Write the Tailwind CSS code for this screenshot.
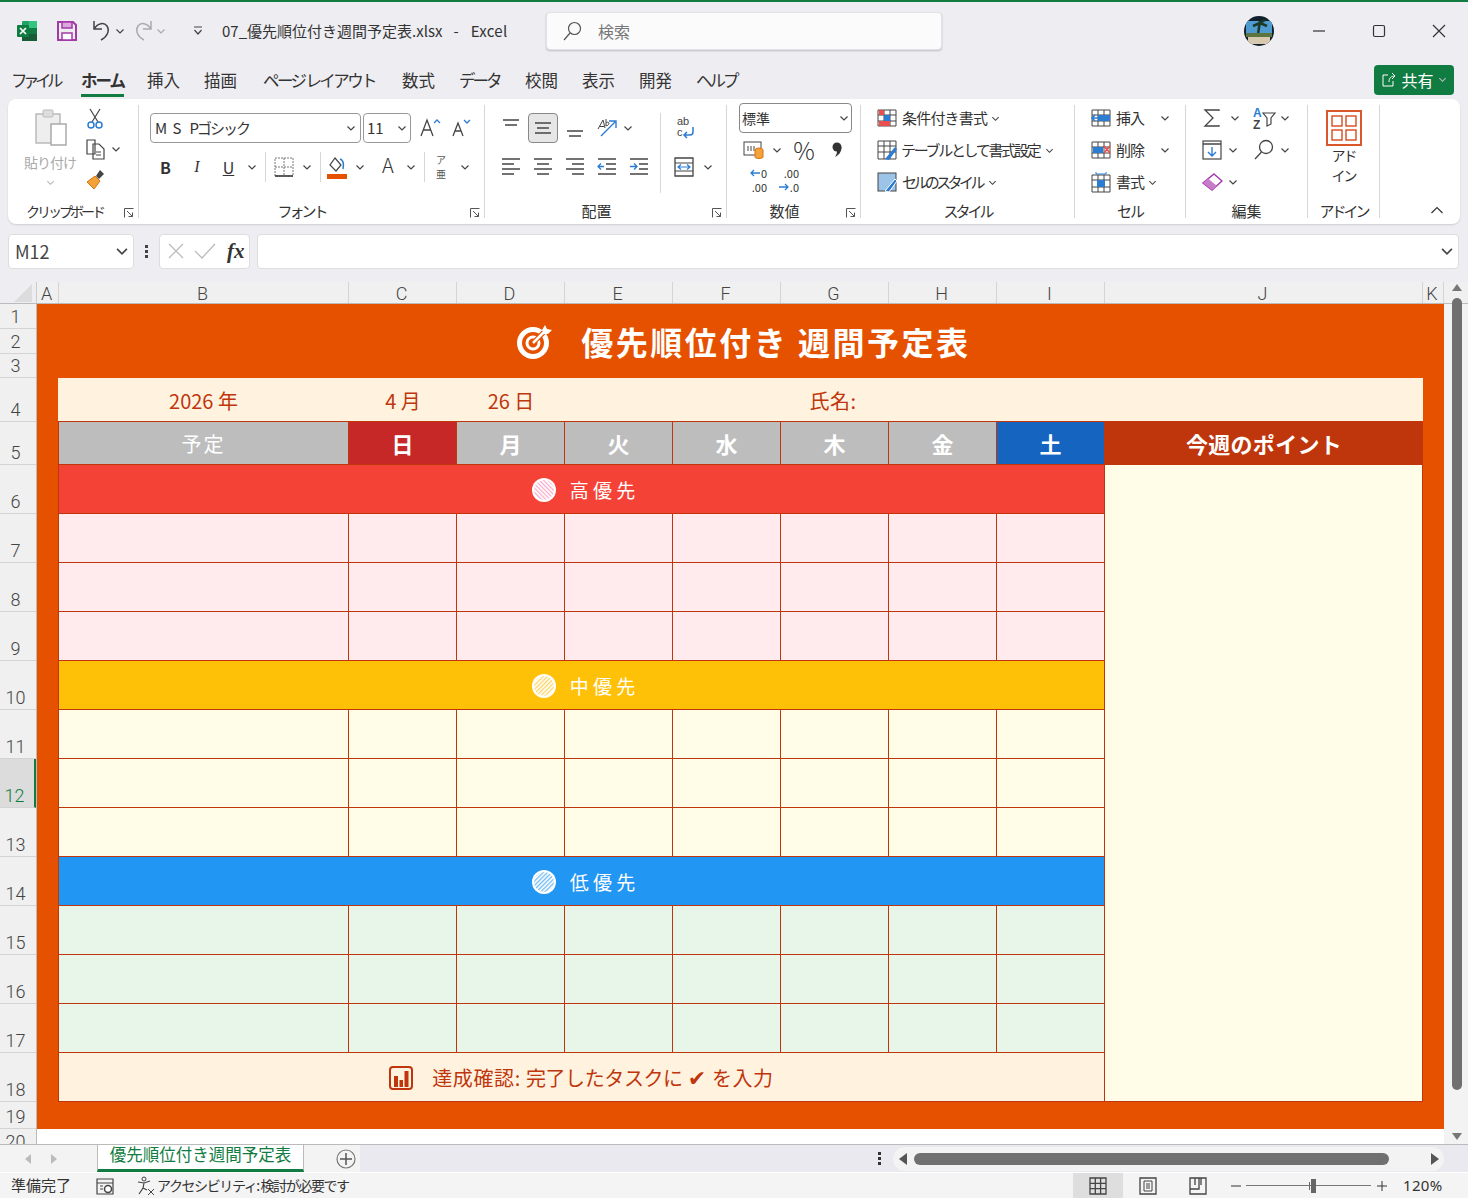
<!DOCTYPE html>
<html lang="ja">
<head>
    <meta charset="UTF-8">
    <title>07_優先順位付き週間予定表.xlsx - Excel</title>
    <script src="https://cdn.jsdelivr.net/npm/@tailwindcss/browser@4"></script>
</head>
<body class="w-[1468px] h-[1198px] overflow-hidden bg-[#eeedf2] text-[#333] font-['Noto_Sans_CJK_JP','Noto_Sans',sans-serif]">

    <!-- shared shapes -->
    <svg class="absolute w-0 h-0">
        <defs>
            <symbol id="chev" viewBox="0 0 10 10"><path d="M1.5 3.5 5 7 8.5 3.5" fill="none" stroke="#444" stroke-width="1.2"/></symbol>
            <symbol id="launch" viewBox="0 0 10 10"><path d="M.5 9.5V.5H9.5M3 3 8.500 8.500M8.500 4.500V8.500H4.500" fill="none" stroke="#555"/></symbol>
            <pattern id="hatchRed" width="3" height="3" patternUnits="userSpaceOnUse" patternTransform="rotate(-45)"><rect width="1.200" height="3" fill="#f8a9c8"/></pattern>
            <pattern id="hatchAmber" width="3" height="3" patternUnits="userSpaceOnUse" patternTransform="rotate(45)"><rect width="1.300" height="3" fill="#ffd361"/></pattern>
            <pattern id="hatchBlue" width="3" height="3" patternUnits="userSpaceOnUse" patternTransform="rotate(45)"><rect width="1.300" height="3" fill="#6db8f5"/></pattern>
        </defs>
    </svg>

    <!-- title bar -->
    <header class="h-[64px] border-t-2 border-[#107c41] pb-[4px] flex items-center relative">
        <svg class="w-[22px] h-[22px] ml-[16px]" viewBox="0 0 22 22"><rect x="6" y="1" width="15" height="20" rx="1" fill="#21a366"/><rect x="13" y="1" width="8" height="7" fill="#33c481"/><rect x="13" y="8" width="8" height="6.500" fill="#107c41"/><rect x="6" y="14" width="15" height="7" fill="#185c37"/><rect x="1" y="5" width="12" height="12" rx="1" fill="#107c41"/><path d="M4 8 10 14M10 8 4 14" stroke="#fff" stroke-width="1.700"/></svg>
        <svg class="w-[22px] h-[22px] ml-[18px]" viewBox="0 0 22 22"><path d="M2 2H17L20 5V20H2Z" fill="none" stroke="#a23aa7" stroke-width="2"/><rect x="6" y="2" width="10" height="6" fill="#dba8de" stroke="#a23aa7" stroke-width="1.500"/><rect x="6" y="13" width="10" height="7" fill="#fff" stroke="#a23aa7" stroke-width="1.500"/></svg>
        <svg class="w-[22px] h-[24px] ml-[13px]" viewBox="0 0 22 24"><path d="M3 2V10H11M3 10C7 4 13 3 16 7 19 12 16 18 10 21" fill="none" stroke="#444" stroke-width="1.500"/></svg>
        <svg class="w-[10px] h-[10px] ml-[2px]"><use href="#chev"/></svg>
        <svg class="w-[22px] h-[24px] ml-[7px]" viewBox="0 0 22 24"><path d="M19 2V10H11M19 10C15 4 9 3 6 7 3 12 6 18 12 21" fill="none" stroke="#aaa" stroke-width="1.500"/></svg>
        <svg class="w-[10px] h-[10px] ml-[2px] opacity-40"><use href="#chev"/></svg>
        <svg class="w-[10px] h-[10px] ml-[27px]" viewBox="0 0 10 10"><path d="M1 1H9M1.500 4 5 8 8.500 4" fill="none" stroke="#444" stroke-width="1.200"/></svg>
        <div class="ml-[19px] text-[15px] whitespace-nowrap w-[324px]">07_優先順位付き週間予定表.xlsx<span class="ml-[11px]">-</span><span class="ml-[12px] tracking-[.3px]">Excel</span></div>
        <div class="w-[396px] h-[38px] bg-[#fbfbfc] rounded border border-[#e2e2e6] shadow-[0_1px_2px_#0003] flex items-center">
            <svg class="w-[22px] h-[22px] ml-[14px]" viewBox="0 0 22 22"><circle cx="13.500" cy="8.500" r="6" fill="none" stroke="#555" stroke-width="1.200"/><path d="M9 13 3 20" stroke="#555" stroke-width="1.200"/></svg>
            <span class="ml-[15px] text-[16px] text-[#777]">検索</span>
        </div>
        <svg class="w-[30px] h-[30px] ml-[302px]" viewBox="0 0 30 30"><defs><clipPath id="face"><ellipse cx="15" cy="15" rx="15" ry="15"/></clipPath></defs><g clip-path="url(#face)"><rect width="30" height="30" fill="#10202c"/><rect x="2" y="5" width="26" height="14" fill="#4f9bd0"/><path d="M16 5 14 18M16 7 23 10M16 7 9 10M16 7 21 4" stroke="#1d3a28" stroke-width="2.500"/><rect x="2" y="17" width="26" height="4" fill="#5c7440"/><rect x="4" y="21" width="22" height="7" fill="#d6c9ae"/></g></svg>
        <svg class="w-[14px] h-[14px] ml-[38px]" viewBox="0 0 14 14"><path d="M1 7H13" stroke="#333" stroke-width="1.200"/></svg>
        <svg class="w-[14px] h-[14px] ml-[46px]" viewBox="0 0 14 14"><rect x="1.500" y="1.500" width="11" height="11" rx="1.500" fill="none" stroke="#333" stroke-width="1.200"/></svg>
        <svg class="w-[16px] h-[16px] ml-[45px]" viewBox="0 0 16 16"><path d="M2 2 14 14M14 2 2 14" stroke="#333" stroke-width="1.200"/></svg>
    </header>

    <!-- ribbon tabs -->
    <nav class="h-[35px] flex items-center pl-[11px] pb-[2px] text-[16.500px] whitespace-nowrap relative">
        <a class="w-[70px] tracking-[-4.500px] -mt-[1px]">ファイル</a>
        <a class="w-[66px] font-bold tracking-[-2px] relative -mt-[1px]">ホーム<span class="absolute left-0 top-[26px] w-[43px] h-[3px] bg-[#107c41]"></span></a>
        <a class="w-[57px] -mt-[1px]">挿入</a>
        <a class="w-[59px] -mt-[1px]">描画</a>
        <a class="w-[139px] tracking-[-2.600px] -mt-[1px]">ページ&nbsp;レイアウト</a>
        <a class="w-[57px] -mt-[1px]">数式</a>
        <a class="w-[66px] tracking-[-3px] -mt-[1px]">データ</a>
        <a class="w-[57px] -mt-[1px]">校閲</a>
        <a class="w-[57px] -mt-[1px]">表示</a>
        <a class="w-[57px] -mt-[1px]">開発</a>
        <a class="w-[60px] tracking-[-3px] -mt-[1px]">ヘルプ</a>
        <button class="ml-[618px] w-[80px] h-[30px] -mt-[2px] rounded bg-[#107c41] text-white text-[16px] flex items-center justify-center">
            <svg class="w-[16px] h-[16px]" viewBox="0 0 16 16"><path d="M7 3H2V14H12V9M8 10C8 6 10 4 14 4M11 1 14 4 11 7" fill="none" stroke="#fff"/></svg>
            <span class="mx-[4px]">共有</span>
            <svg class="w-[9px] h-[9px] invert"><use href="#chev"/></svg>
        </button>
    </nav>

    <!-- ribbon -->
    <section class="mx-[8px] h-[125px] bg-white rounded-lg shadow-[0_1px_2px_#0002] flex py-[6px] text-[15px] whitespace-nowrap">

        <!-- clipboard -->
        <div class="w-[131px] h-[113px] border-r border-[#d6d6d6] flex flex-col relative">
            <div class="flex pl-[12px] h-[94px]">
                <div class="w-[60px] flex flex-col items-center">
                    <svg class="w-[34px] h-[38px] mt-[4px]" viewBox="0 0 34 38"><path d="M3 5H27V34H3Z" fill="#eee" stroke="#bbb" stroke-width="1.500"/><rect x="10" y="1" width="10" height="7" rx="1" fill="#ddd" stroke="#bbb"/><rect x="18" y="15" width="15" height="21" fill="#fff" stroke="#aaa" stroke-width="1.500"/></svg>
                    <span class="text-[14px] text-[#aaa] tracking-[-1px] mt-[5px] leading-[20px]">貼り付け</span>
                    <svg class="w-[9px] h-[9px] mt-[6px] opacity-40"><use href="#chev"/></svg>
                </div>
                <div class="ml-[5px] pt-[3px]">
                    <svg class="w-[20px] h-[22px]" viewBox="0 0 20 22"><path d="M5 1 13 14M15 1 7 14" stroke="#444" stroke-width="1.200"/><circle cx="6" cy="17" r="3" fill="none" stroke="#2b7cd3" stroke-width="1.500"/><circle cx="14" cy="17" r="3" fill="none" stroke="#2b7cd3" stroke-width="1.500"/></svg>
                    <div class="flex items-center mt-[8px]">
                        <svg class="w-[22px] h-[22px]" viewBox="0 0 22 22"><path d="M2 2H10V16H2ZM8 6H14L19 11V21H8Z" fill="#fff" stroke="#444" stroke-width="1.200"/><path d="M11 14H16M11 17H16" stroke="#444"/></svg>
                        <svg class="w-[10px] h-[10px] ml-[4px]"><use href="#chev"/></svg>
                    </div>
                    <svg class="w-[22px] h-[24px] mt-[8px]" viewBox="0 0 22 24"><path d="M15 2 19 6 14 11 11 8Z" fill="#444"/><path d="M10 8 15 13 9 21 2 14Z" fill="#f2a13b" stroke="#d9730d"/></svg>
                </div>
            </div>
            <div class="mt-auto h-[14px] leading-[14px] text-[14px] text-center pr-[17px] tracking-[-3px]">クリップボード</div>
            <svg class="w-[10px] h-[10px] absolute right-[4px] bottom-0"><use href="#launch"/></svg>
        </div>

        <!-- font -->
        <div class="w-[346px] h-[113px] border-r border-[#d6d6d6] flex flex-col relative">
            <div class="flex items-center pl-[11px] pt-[8px] h-[38px]">
                <div class="w-[211px] h-[30px] border border-[#999] rounded flex items-center pl-[4px] pr-[4px]">
                    <span class="tracking-[1px]">M S</span>
                    <span class="ml-[7px] tracking-[-2px]">Pゴシック</span>
                    <svg class="w-[10px] h-[10px] ml-auto"><use href="#chev"/></svg>
                </div>
                <div class="w-[48px] h-[30px] ml-[2px] border border-[#999] rounded flex items-center pl-[3px] pr-[3px]">
                    <span>11</span>
                    <svg class="w-[10px] h-[10px] ml-auto"><use href="#chev"/></svg>
                </div>
                <svg class="w-[22px] h-[22px] ml-[8px]" viewBox="0 0 22 22"><path d="M2 19 8 3 14 19M4 13H12" fill="none" stroke="#444" stroke-width="1.300"/><path d="M15 6 18 3 21 6" fill="none" stroke="#2b7cd3" stroke-width="1.300"/></svg>
                <svg class="w-[20px] h-[20px] ml-[10px]" viewBox="0 0 20 20"><path d="M2 18 7 5 12 18M4 13H10" fill="none" stroke="#444" stroke-width="1.300"/><path d="M13 2 16 5 19 2" fill="none" stroke="#2b7cd3" stroke-width="1.300"/></svg>
            </div>
            <div class="flex items-center mt-[9px] h-[30px] pl-[16px]">
                <b class="w-[21px] text-center text-[16px]">B</b>
                <i class="w-[32px] text-center text-[16px] ml-[5px] font-['Liberation_Serif',serif]">I</i>
                <u class="w-[27px] text-center text-[16px] ml-[2px]">U</u>
                <svg class="w-[10px] h-[10px] ml-[5px]"><use href="#chev"/></svg>
                <span class="w-px h-[30px] bg-[#d6d6d6] ml-[8px]"></span>
                <svg class="w-[20px] h-[20px] ml-[8px]" viewBox="0 0 20 20"><path d="M1 1H19V19H1ZM10 1V19M1 10H19" fill="none" stroke="#777" stroke-dasharray="2 1"/><path d="M1 19H19" stroke="#333" stroke-width="1.500"/></svg>
                <svg class="w-[10px] h-[10px] ml-[8px]"><use href="#chev"/></svg>
                <span class="w-px h-[30px] bg-[#d6d6d6] ml-[8px]"></span>
                <span class="w-[20px] ml-[6px] flex flex-col items-center">
                    <svg class="w-[20px] h-[18px]" viewBox="0 0 20 18"><path d="M8 2 14 9 9 15 3 9Z" fill="none" stroke="#444" stroke-width="1.200"/><path d="M13 3C16 4 17 8 16 13" fill="none" stroke="#2b7cd3" stroke-width="1.500"/></svg>
                    <span class="w-[20px] h-[5px] bg-[#e65100]"></span>
                </span>
                <svg class="w-[10px] h-[10px] ml-[8px]"><use href="#chev"/></svg>
                <span class="w-[24px] ml-[11px] text-center text-[20px] -mt-[4px] font-light">A</span>
                <svg class="w-[10px] h-[10px] ml-[6px]"><use href="#chev"/></svg>
                <span class="w-px h-[30px] bg-[#d6d6d6] ml-[8px]"></span>
                <span class="w-[18px] ml-[7px] text-[10px] leading-[14px] text-center text-[#555]">ア<br>亜</span>
                <svg class="w-[10px] h-[10px] ml-[10px]"><use href="#chev"/></svg>
            </div>
            <div class="mt-auto h-[14px] leading-[14px] text-center pr-[20px] tracking-[-3px]">フォント</div>
            <svg class="w-[10px] h-[10px] absolute right-[4px] bottom-0"><use href="#launch"/></svg>
        </div>

        <!-- alignment -->
        <div class="w-[242px] h-[113px] border-r border-[#d6d6d6] flex flex-col relative">
            <div class="flex pl-[10px] pt-[8px]">
                <div class="w-[160px]">
                    <div class="flex items-center h-[30px]">
                        <svg class="w-[32px] h-[30px] -mt-[6px]" viewBox="0 0 32 30"><path d="M8 10H24M10 15H22" stroke="#444" stroke-width="1.300"/></svg>
                        <span class="w-[30px] h-[30px] border border-[#888] bg-[#e6e6e6] rounded flex items-center justify-center ml-[1px]"><svg class="w-[20px] h-[20px]" viewBox="0 0 20 20"><path d="M2 5H18M4 10H16M2 15H18" stroke="#444" stroke-width="1.300"/></svg></span>
                        <svg class="w-[32px] h-[30px] mt-[6px] ml-[1px]" viewBox="0 0 32 30"><path d="M8 15H24M10 20H22" stroke="#444" stroke-width="1.300"/></svg>
                        <svg class="w-[24px] h-[24px] ml-[4px]" viewBox="0 0 24 24"><path d="M3 13 8 4 10 12M4.500 10.500H9M11 3V10M11 7C13 5 15 7 13 9 12 10 11 10 11 9" fill="none" stroke="#444"/><path d="M6 20 20 6M14 5H21V12" fill="none" stroke="#2b7cd3" stroke-width="1.400"/></svg>
                        <svg class="w-[10px] h-[10px] ml-[4px]"><use href="#chev"/></svg>
                    </div>
                    <div class="flex items-center h-[30px] mt-[9px]">
                        <svg class="w-[32px] h-[24px]" viewBox="0 0 32 24"><path d="M7 4H25M7 9H19M7 14H25M7 19H19" stroke="#444" stroke-width="1.300"/></svg>
                        <svg class="w-[32px] h-[24px]" viewBox="0 0 32 24"><path d="M7 4H25M10 9H22M7 14H25M10 19H22" stroke="#444" stroke-width="1.300"/></svg>
                        <svg class="w-[32px] h-[24px]" viewBox="0 0 32 24"><path d="M7 4H25M13 9H25M7 14H25M13 19H25" stroke="#444" stroke-width="1.300"/></svg>
                        <svg class="w-[32px] h-[24px]" viewBox="0 0 32 24"><path d="M7 4H25M15 9H25M15 14H25M7 19H25" stroke="#444" stroke-width="1.300"/><path d="M13 11.500H7M10 8.500 7 11.500 10 14.500" fill="none" stroke="#2b7cd3" stroke-width="1.300"/></svg>
                        <svg class="w-[32px] h-[24px]" viewBox="0 0 32 24"><path d="M7 4H25M16 9H25M16 14H25M7 19H25" stroke="#444" stroke-width="1.300"/><path d="M7 11.500H14M11 8.500 14 11.500 11 14.500" fill="none" stroke="#2b7cd3" stroke-width="1.300"/></svg>
                    </div>
                </div>
                <span class="w-px h-[80px] bg-[#d6d6d6] ml-[5px]"></span>
                <div class="ml-[12px]">
                    <div class="h-[30px] flex items-center pl-[1px]">
                        <svg class="w-[22px] h-[26px] overflow-visible" viewBox="0 0 22 26"><text x="3" y="10" font-size="11" font-family="Liberation Sans" fill="#444">ab</text><text x="3" y="21" font-size="11" font-family="Liberation Sans" fill="#444">c</text><path d="M19 12V17C19 19 18 20 16 20H10M13 17 10 20 13 23" fill="none" stroke="#2b7cd3" stroke-width="1.500"/></svg>
                    </div>
                    <div class="h-[30px] mt-[9px] flex items-center">
                        <svg class="w-[22px] h-[22px]" viewBox="0 0 22 22"><path d="M2 2H20V20H2Z" fill="#fff" stroke="#444" stroke-width="1.300"/><path d="M2 7H20M2 15H20" stroke="#444"/><path d="M5 11H17M8 8.500 5 11 8 13.500M14 8.500 17 11 14 13.500" fill="none" stroke="#2b7cd3" stroke-width="1.200"/></svg>
                        <svg class="w-[10px] h-[10px] ml-[8px]"><use href="#chev"/></svg>
                    </div>
                </div>
            </div>
            <div class="mt-auto h-[14px] leading-[14px] text-center pr-[18px]">配置</div>
            <svg class="w-[10px] h-[10px] absolute right-[4px] bottom-0"><use href="#launch"/></svg>
        </div>

        <!-- number -->
        <div class="w-[134px] h-[113px] border-r border-[#d6d6d6] flex flex-col relative">
            <div class="w-[113px] h-[30px] ml-[12px] mt-[-2px] border border-[#888] rounded flex items-center pl-[2px] pr-[2px]">
                <span class="text-[14px]">標準</span>
                <svg class="w-[10px] h-[10px] ml-auto"><use href="#chev"/></svg>
            </div>
            <div class="flex items-center h-[30px] mt-[2px] pl-[16px]">
                <svg class="w-[22px] h-[22px]" viewBox="0 0 22 22"><rect x="1" y="3" width="17" height="13" fill="none" stroke="#444"/><path d="M5 7V12M8 7V12M11 7V12" stroke="#444"/><ellipse cx="16" cy="11" rx="4" ry="2" fill="#f2a13b" stroke="#d9730d"/><path d="M12 11V18C12 20 20 20 20 18V11" fill="#f2a13b" stroke="#d9730d"/></svg>
                <svg class="w-[10px] h-[10px] ml-[7px]"><use href="#chev"/></svg>
                <span class="w-[30px] ml-[7px] text-center text-[24px] leading-none font-light">%</span>
                <svg class="w-[12px] h-[18px] ml-[12px]" viewBox="0 0 12 18"><circle cx="6" cy="6" r="4.500" fill="#333"/><path d="M10.500 6C10.500 11 8 14 4 16 6 13 6 11 6 9Z" fill="#333"/></svg>
            </div>
            <div class="flex items-center h-[30px] pl-[16px] text-[11px] leading-[14px]">
                <span class="w-[24px] text-right">
                    <span class="flex items-center justify-end h-[14px]"><svg class="w-[10px] h-[10px] mr-[1px]" viewBox="0 0 10 10"><path d="M10 5H1M4 2 1 5 4 8" fill="none" stroke="#2b7cd3" stroke-width="1.300"/></svg>0</span>
                    <span class="block h-[14px]">.00</span>
                </span>
                <span class="w-[24px] ml-[8px] text-right">
                    <span class="block h-[14px]">.00</span>
                    <span class="flex items-center justify-end h-[14px]"><svg class="w-[10px] h-[10px] mr-[1px]" viewBox="0 0 10 10"><path d="M0 5H9M6 2 9 5 6 8" fill="none" stroke="#2b7cd3" stroke-width="1.300"/></svg>.0</span>
                </span>
            </div>
            <div class="mt-auto h-[14px] leading-[14px] text-center pr-[18px]">数値</div>
            <svg class="w-[10px] h-[10px] absolute right-[4px] bottom-0"><use href="#launch"/></svg>
        </div>

        <!-- styles -->
        <div class="w-[214px] h-[113px] border-r border-[#d6d6d6] flex flex-col pl-[15px] relative">
            <div class="flex items-center h-[32px] -mt-[3px]">
                <svg class="w-[22px] h-[22px]" viewBox="0 0 22 22"><path d="M2 3H20V19H2ZM2 8H20M2 14H20M8 3V19M14 3V19" fill="none" stroke="#444"/><rect x="3" y="3" width="5" height="5" fill="#e84f4f"/><rect x="8" y="8" width="6" height="6" fill="#2b7cd3"/><rect x="3" y="14" width="11" height="5" fill="#e84f4f"/></svg>
                <span class="ml-[4px] tracking-[-.8px]">条件付き書式</span>
                <svg class="w-[9px] h-[9px] ml-[4px]"><use href="#chev"/></svg>
            </div>
            <div class="flex items-center h-[32px]">
                <svg class="w-[22px] h-[22px]" viewBox="0 0 22 22"><path d="M2 2H20V20H2ZM2 7H20M2 13H20M8 2V20M14 2V20" fill="none" stroke="#444"/><path d="M9 20 19 8 21 10 13 21Z" fill="#2b7cd3"/></svg>
                <span class="ml-[3px] tracking-[-2.300px]">テーブルとして書式設定</span>
                <svg class="w-[9px] h-[9px] ml-[6px]"><use href="#chev"/></svg>
            </div>
            <div class="flex items-center h-[32px]">
                <svg class="w-[22px] h-[22px]" viewBox="0 0 22 22"><rect x="2" y="2" width="18" height="18" fill="#9cc3e8" stroke="#444"/><path d="M9 20 19 8 21 10 13 21Z" fill="#2b7cd3" stroke="#fff"/></svg>
                <span class="ml-[4px] tracking-[-3.600px]">セルのスタイル</span>
                <svg class="w-[9px] h-[9px] ml-[6px]"><use href="#chev"/></svg>
            </div>
            <div class="mt-auto h-[14px] leading-[14px] text-center pr-[15px] tracking-[-3px]">スタイル</div>
        </div>

        <!-- cells -->
        <div class="w-[111px] h-[113px] border-r border-[#d6d6d6] flex flex-col pl-[15px]">
            <div class="flex items-center h-[32px] -mt-[3px]">
                <svg class="w-[22px] h-[22px]" viewBox="0 0 22 22"><path d="M2 3H20V19H2ZM2 8H20M2 14H20M8 3V19M14 3V19" fill="none" stroke="#444"/><rect x="8" y="8" width="12" height="6" fill="#2b7cd3"/><path d="M10 11H2M5 8 2 11 5 14" fill="none" stroke="#2b7cd3" stroke-width="1.500"/></svg>
                <span class="ml-[4px] tracking-[-1px] w-[44px]">挿入</span>
                <svg class="w-[10px] h-[10px]"><use href="#chev"/></svg>
            </div>
            <div class="flex items-center h-[32px]">
                <svg class="w-[22px] h-[22px]" viewBox="0 0 22 22"><path d="M2 3H20V19H2ZM2 8H20M2 14H20M8 3V19M14 3V19" fill="none" stroke="#444"/><rect x="3" y="8" width="10" height="6" fill="#2b7cd3"/><path d="M14 7 20 14M20 7 14 14" stroke="#e84f4f" stroke-width="1.700"/></svg>
                <span class="ml-[4px] tracking-[-1px] w-[44px]">削除</span>
                <svg class="w-[10px] h-[10px]"><use href="#chev"/></svg>
            </div>
            <div class="flex items-center h-[32px]">
                <svg class="w-[22px] h-[22px]" viewBox="0 0 22 22"><path d="M2 4H20V21H2ZM2 9H20M2 16H20M8 4V21M14 4V21" fill="none" stroke="#444"/><rect x="7" y="9" width="8" height="7" fill="#2b7cd3"/><path d="M6 1V3H16V1" fill="none" stroke="#2b7cd3"/></svg>
                <span class="ml-[4px] tracking-[-1px]">書式</span>
                <svg class="w-[9px] h-[9px] ml-[4px]"><use href="#chev"/></svg>
            </div>
            <div class="mt-auto h-[14px] leading-[14px] text-center pr-[15px] tracking-[-2px]">セル</div>
        </div>

        <!-- editing -->
        <div class="w-[122px] h-[113px] border-r border-[#d6d6d6] flex flex-col pl-[15px]">
            <div class="flex items-center h-[32px] -mt-[3px]">
                <svg class="w-[22px] h-[22px]" viewBox="0 0 22 22"><path d="M18 4V3H4L12 11 4 19H18V18" fill="none" stroke="#444" stroke-width="1.300"/></svg>
                <svg class="w-[10px] h-[10px] ml-[7px]"><use href="#chev"/></svg>
                <svg class="w-[24px] h-[24px] ml-[12px] overflow-visible" viewBox="0 0 24 24"><text x="1" y="11" font-size="12" font-weight="700" font-family="Liberation Sans" fill="#2b7cd3">A</text><text x="1" y="23" font-size="12" font-weight="700" font-family="Liberation Sans" fill="#444">Z</text><path d="M11 7H23L19 12V18L15 20V12Z" fill="none" stroke="#444" stroke-width="1.200"/></svg>
                <svg class="w-[10px] h-[10px] ml-[4px]"><use href="#chev"/></svg>
            </div>
            <div class="flex items-center h-[32px]">
                <svg class="w-[22px] h-[22px]" viewBox="0 0 22 22"><rect x="2" y="2" width="18" height="18" fill="#fff" stroke="#444" stroke-width="1.200"/><path d="M2 5H20" stroke="#444" stroke-width="1.500"/><path d="M11 8V17M7 13 11 17 15 13" fill="none" stroke="#2b7cd3" stroke-width="1.400"/></svg>
                <svg class="w-[10px] h-[10px] ml-[5px]"><use href="#chev"/></svg>
                <svg class="w-[22px] h-[22px] ml-[15px]" viewBox="0 0 22 22"><circle cx="13" cy="8" r="6.500" fill="none" stroke="#444" stroke-width="1.300"/><path d="M8.500 13 2 20" stroke="#444" stroke-width="1.300"/></svg>
                <svg class="w-[10px] h-[10px] ml-[5px]"><use href="#chev"/></svg>
            </div>
            <div class="flex items-center h-[32px]">
                <svg class="w-[22px] h-[22px]" viewBox="0 0 22 22"><path d="M13 3 21 10 11 19 2 12Z" fill="#fff" stroke="#a23aa7" stroke-width="1.500"/><path d="M7 7.500 16 15 11 19 2 12Z" fill="#c77bc9"/></svg>
                <svg class="w-[10px] h-[10px] ml-[5px]"><use href="#chev"/></svg>
            </div>
            <div class="mt-auto h-[14px] leading-[14px] text-center pr-[15px]">編集</div>
        </div>

        <!-- add-ins -->
        <div class="w-[72px] h-[113px] border-r border-[#d6d6d6] flex flex-col items-center">
            <svg class="w-[36px] h-[36px] mt-[5px]" viewBox="0 0 36 36"><rect x="1" y="1" width="34" height="34" fill="none" stroke="#d9572b" stroke-width="2"/><path d="M6 6H16V16H6ZM20 6H30V16H20ZM6 20H16V30H6ZM20 20H30V30H20Z" fill="none" stroke="#d9572b" stroke-width="1.500"/></svg>
            <div class="text-[14px] leading-[20px] text-center mt-[-1px] tracking-[-2px]">アド<br>イン</div>
            <div class="mt-auto h-[14px] leading-[14px] tracking-[-3px]">アドイン</div>
        </div>
        <div class="flex-1 flex items-end justify-end pr-[16px] pb-[1px]">
            <svg class="w-[14px] h-[14px]" viewBox="0 0 14 14"><path d="M1.500 10 7 4.500 12.500 10" fill="none" stroke="#333" stroke-width="1.200"/></svg>
        </div>
    </section>

    <!-- formula bar -->
    <div class="h-[36px] mt-[9px] flex items-center pl-[8px] pr-[9px]">
        <div class="w-[126px] h-[35px] bg-white border border-[#ddd] rounded flex items-center pl-[6px] pr-[4px] text-[18px] text-[#444]">
            <span>M12</span>
            <svg class="w-[14px] h-[14px] ml-auto"><use href="#chev"/></svg>
        </div>
        <div class="w-[25px] flex flex-col items-center gap-[2px]"><i class="w-[3px] h-[3px] bg-[#444]"></i><i class="w-[3px] h-[3px] bg-[#444]"></i><i class="w-[3px] h-[3px] bg-[#444]"></i></div>
        <div class="w-[91px] h-[35px] bg-white border border-[#ddd] rounded flex items-center pl-[7px]">
            <svg class="w-[18px] h-[18px]" viewBox="0 0 18 18"><path d="M2 2 16 16M16 2 2 16" stroke="#bbb" stroke-width="1.300"/></svg>
            <svg class="w-[22px] h-[18px] ml-[9px]" viewBox="0 0 22 18"><path d="M1 9 8 16 21 2" fill="none" stroke="#bbb" stroke-width="1.300"/></svg>
            <span class="ml-[11px] text-[21px] leading-none font-bold italic font-['Liberation_Serif',serif]">fx</span>
        </div>
        <div class="flex-1 ml-[7px] h-[35px] bg-white border border-[#ddd] rounded flex items-center justify-end pr-[4px]">
            <svg class="w-[14px] h-[14px]"><use href="#chev"/></svg>
        </div>
    </div>

    <!-- column headers -->
    <div class="h-[21px] mt-[13px] flex">
        <div class="w-[37px] flex justify-end items-end pr-[4px] pb-[1px] border-r border-[#ccc]"><span class="w-0 h-0 border-b-[18px] border-l-[18px] border-b-[#dcdcdc] border-l-transparent"></span></div>
        <div id="colHeads" class="flex bg-[#f0f0f0] text-[18px] leading-[24px] text-[#444] font-light font-['Roboto',sans-serif]"></div>
        <div class="flex-1 bg-[#f0f0f0] relative">
            <svg class="w-[12px] h-[10px] absolute left-[7px] top-0" viewBox="0 0 12 10"><path d="M1 9 6 2 11 9Z" fill="#777"/></svg>
        </div>
    </div>

    <!-- sheet -->
    <div class="h-[841px] flex border-t border-[#bbb]">
        <div id="rowHeads" class="w-[37px] h-full overflow-hidden bg-[#f0f0f0] border-r border-[#bbb] text-[18px] text-[#444] font-light font-['Roboto',sans-serif]"></div>
        <div class="w-[1407px] h-full bg-white">
            <div class="h-[825px] bg-[#e65100] pl-[21px]">
                <h1 class="h-[74px] flex items-center justify-center pr-[14px] text-white text-[32px] font-bold whitespace-nowrap">
                    <svg class="w-[36px] h-[36px] mr-[28px]" viewBox="0 0 36 36"><circle cx="16" cy="20" r="13.500" fill="none" stroke="#fff" stroke-width="5"/><circle cx="16" cy="20" r="6" fill="none" stroke="#fff" stroke-width="3"/><path d="M16 20 28 8" stroke="#e65100" stroke-width="5"/><path d="M16 20 28 8" stroke="#fff" stroke-width="2.500"/><path d="M25 7 28 2 30 6 35 7 31 11 27 11Z" fill="#fff"/></svg>
                    <span class="tracking-[2.500px]">優先順位付き 週間予定表</span>
                </h1>
                <div id="plan" class="grid grid-cols-[291px_repeat(7,108px)_318px] grid-rows-[44px_43px_repeat(13,49px)] text-[20px] text-[#bf360c]">
                    <div class="col-span-9 row-start-1 col-start-1 bg-[#fff3e0] border-b border-[#bf360c]"></div>
                    <div class="row-start-1 col-start-1 pt-[2px] flex items-center justify-center">2026 年</div>
                    <div class="row-start-1 col-start-2 pt-[2px] flex items-center justify-center">4 月</div>
                    <div class="row-start-1 col-start-3 pt-[2px] flex items-center justify-center">26 日</div>
                    <div class="row-start-1 col-start-6 pt-[2px] pr-[4px] tracking-[.5px] flex items-center justify-center">氏名:</div>

                    <div class="row-start-2 col-start-1 bg-[#bdbdbd] border-x border-b border-[#bf360c] text-white flex items-center justify-center tracking-[2px] pt-[2px]">予定</div>
                    <div class="row-start-2 col-start-2 bg-[#c62828] border-r border-b border-[#bf360c] text-white font-bold text-[22px] flex items-center justify-center">日</div>
                    <div class="row-start-2 col-start-3 bg-[#bdbdbd] border-r border-b border-[#bf360c] text-white font-bold text-[22px] flex items-center justify-center">月</div>
                    <div class="row-start-2 col-start-4 bg-[#bdbdbd] border-r border-b border-[#bf360c] text-white font-bold text-[22px] flex items-center justify-center">火</div>
                    <div class="row-start-2 col-start-5 bg-[#bdbdbd] border-r border-b border-[#bf360c] text-white font-bold text-[22px] flex items-center justify-center">水</div>
                    <div class="row-start-2 col-start-6 bg-[#bdbdbd] border-r border-b border-[#bf360c] text-white font-bold text-[22px] flex items-center justify-center">木</div>
                    <div class="row-start-2 col-start-7 bg-[#bdbdbd] border-r border-b border-[#bf360c] text-white font-bold text-[22px] flex items-center justify-center">金</div>
                    <div class="row-start-2 col-start-8 bg-[#1565c0] border-r border-b border-[#bf360c] text-white font-bold text-[22px] flex items-center justify-center">土</div>
                    <div class="row-start-2 col-start-9 bg-[#bf360c] text-white font-bold text-[22px] tracking-[.3px] flex items-center justify-center">今週のポイント</div>

                    <div class="row-start-3 row-span-13 col-start-9 bg-[#fffde7] border-r border-b border-[#bf360c]"></div>
                    <div class="row-start-15 col-start-1 col-span-8 bg-[#fff3e0] border-x border-b border-[#bf360c] pt-[2px] flex items-center justify-center whitespace-nowrap tracking-[.6px]">
                        <svg class="w-[24px] h-[24px] mr-[19px]" viewBox="0 0 24 24"><rect x="1" y="1" width="22" height="22" rx="3" fill="#fff3e0" stroke="#bf360c" stroke-width="2"/><path d="M5 10H9V21H5ZM10.500 14H14V21H10.500ZM15.500 5H19.500V21H15.500Z" fill="#bf360c"/></svg>
                        <span>達成確認: <span class="tracking-[-.4px]">完了したタスクに</span> <span class="text-[22px] leading-none font-['DejaVu_Sans',sans-serif] font-bold">✔</span> を入力</span>
                    </div>
                </div>
            </div>
        </div>
        <div class="flex-1 bg-[#f3f3f3] relative">
            <div class="absolute left-[8px] top-[-6px] w-[10px] h-[792px] rounded-full bg-[#707070]"></div>
            <svg class="w-[12px] h-[10px] absolute left-[7px] bottom-[2px]" viewBox="0 0 12 10"><path d="M1 1 6 8 11 1Z" fill="#777"/></svg>
        </div>
    </div>

    <!-- sheet tabs -->
    <div class="h-[28px] flex items-center border-t border-[#bbb] bg-[#e9e9ef]">
        <div class="w-[97px] h-full bg-[#f3f3f3] flex items-center pl-[24px] gap-[18px]">
            <svg class="w-[8px] h-[10px]" viewBox="0 0 8 10"><path d="M7 0V10L1 5Z" fill="#bbb"/></svg>
            <svg class="w-[8px] h-[10px]" viewBox="0 0 8 10"><path d="M1 0V10L7 5Z" fill="#bbb"/></svg>
        </div>
        <div class="w-[207px] h-full bg-white border-x border-[#bbb] border-b-[3px] border-b-[#107c41] text-[#107c41] text-[16.500px] leading-[19px] text-center whitespace-nowrap">優先順位付き週間予定表</div>
        <div class="w-[56px] h-full bg-[#f3f3f3] flex items-center justify-end pr-[4px]">
            <svg class="w-[20px] h-[20px]" viewBox="0 0 20 20"><circle cx="10" cy="10" r="9" fill="#f3f3f3" stroke="#777" stroke-width="1.200"/><path d="M10 4V16M4 10H16" stroke="#555" stroke-width="1.500"/></svg>
        </div>
        <div class="ml-[518px] w-[3px] flex flex-col gap-[2px]"><i class="h-[3px] bg-[#333]"></i><i class="h-[3px] bg-[#333]"></i><i class="h-[3px] bg-[#333]"></i></div>
        <div class="ml-[12px] w-[551px] h-[24px] rounded-full bg-[#f3f3f3] flex items-center pl-[6px]">
            <svg class="w-[8px] h-[12px]" viewBox="0 0 8 12"><path d="M8 0V12L0 6Z" fill="#555"/></svg>
            <span class="ml-[7px] w-[475px] h-[12px] rounded-full bg-[#707070]"></span>
            <svg class="w-[8px] h-[12px] ml-[42px]" viewBox="0 0 8 12"><path d="M0 0V12L8 6Z" fill="#555"/></svg>
        </div>
    </div>

    <!-- status bar -->
    <footer class="h-[26px] bg-[#f4f4f4] border-t border-[#fff] flex items-center pl-[11px] text-[14px] whitespace-nowrap">
        <span class="w-[85px] text-[15px]">準備完了</span>
        <svg class="w-[18px] h-[18px]" viewBox="0 0 18 18"><path d="M1 2H17V17H1ZM1 6H17M4 9H7M4 12H7" fill="none" stroke="#444" stroke-width="1.200"/><circle cx="12" cy="12" r="3.500" fill="#fff" stroke="#444" stroke-width="1.500"/></svg>
        <svg class="w-[20px] h-[20px] ml-[22px]" viewBox="0 0 20 20"><circle cx="8" cy="3" r="2" fill="none" stroke="#444"/><path d="M2 6 8 7 14 5M8 7 7 12 3 18M7 12 11 14" fill="none" stroke="#444" stroke-width="1.200"/><path d="M12 13 18 19M18 13 12 19" stroke="#444"/></svg>
        <span class="ml-[1px] tracking-[-1.400px] w-[916px]">アクセシビリティ: 検討が必要です</span>
        <div class="w-[50px] h-full bg-[#dedede] flex items-center justify-center">
            <svg class="w-[18px] h-[18px]" viewBox="0 0 18 18"><path d="M1 1H17V17H1ZM1 6.300H17M1 11.600H17M6.300 1V17M11.600 1V17" fill="none" stroke="#444" stroke-width="1.300"/></svg>
        </div>
        <svg class="w-[18px] h-[18px] ml-[16px]" viewBox="0 0 18 18"><path d="M1 1H17V17H1Z" fill="none" stroke="#444" stroke-width="1.300"/><path d="M5 4H13V14H5ZM7 7H11M7 9H11M7 11H11" fill="none" stroke="#444"/></svg>
        <svg class="w-[18px] h-[18px] ml-[32px]" viewBox="0 0 18 18"><path d="M1 1H17V17H1ZM1 12H10V1M6 1V8M12 1V8" fill="none" stroke="#444" stroke-width="1.300"/></svg>
        <svg class="w-[10px] h-[10px] ml-[24px]" viewBox="0 0 10 10"><path d="M0 5H10" stroke="#333"/></svg>
        <div class="w-[125px] ml-[5px] h-[12px] relative flex items-center">
            <span class="w-full h-px bg-[#777]"></span>
            <span class="absolute left-[65px] top-[-1px] w-[5px] h-[14px] bg-[#666]"></span>
            <span class="absolute left-[63px] top-[2px] w-px h-[8px] bg-[#666]"></span>
        </div>
        <svg class="w-[10px] h-[10px] ml-[6px]" viewBox="0 0 10 10"><path d="M0 5H10M5 0V10" stroke="#333"/></svg>
        <span class="ml-[16px] text-[15px] tracking-[.3px] font-['Noto_Sans',sans-serif]">120%</span>
    </footer>

    <script>
        // column letters with their widths
        const cols = [["A", 22], ["B", 290], ["C", 108], ["D", 108], ["E", 108], ["F", 108], ["G", 108], ["H", 108], ["I", 108], ["J", 318], ["K", 21]];
        document.getElementById("colHeads").innerHTML = cols.map(([name, width]) =>
            `<div class="text-center pr-[2px] border-r border-[#d4d4d4]" style="width:${width}px">${name}</div>`
        ).join("");

        // row numbers
        const rowHeights = [25, 25, 24, 44, 43, 49, 49, 49, 49, 49, 49, 49, 49, 49, 49, 49, 49, 49, 27, 25];
        document.getElementById("rowHeads").innerHTML = rowHeights.map((height, i) => {
            const active = i === 11;
            const cls = active
                ? "bg-[#dcdcdc] text-[#107c41] border-r-2 border-r-[#107c41]"
                : "";
            return `<div class="flex items-end justify-center pr-[5px] leading-[22px] border-b border-[#d4d4d4] ${cls}" style="height:${height}px">${i + 1}</div>`;
        }).join("");

        // priority sections
        const sections = [
            { label: "高 優 先", banner: "bg-[#f44336]", cell: "bg-[#ffebee]", hatch: "hatchRed" },
            { label: "中 優 先", banner: "bg-[#ffc107]", cell: "bg-[#fffde7]", hatch: "hatchAmber" },
            { label: "低 優 先", banner: "bg-[#2196f3]", cell: "bg-[#e8f5e9]", hatch: "hatchBlue" }
        ];
        const plan = document.getElementById("plan");
        let html = "";
        sections.forEach(section => {
            html += `<div class="col-start-1 col-span-8 ${section.banner} border-x border-b border-[#bf360c] text-white text-[19px] pt-[2px] pl-[4px] flex items-center justify-center whitespace-nowrap">
                <svg class="w-[24px] h-[24px] mr-[14px]" viewBox="0 0 24 24"><circle cx="12" cy="12" r="12" fill="#fff"/><circle cx="12" cy="12" r="10" fill="url(#${section.hatch})"/></svg>
                <span>${section.label}</span>
            </div>`;
            for (let row = 0; row < 3; row++) {
                html += `<div class="col-start-1 ${section.cell} border-x border-b border-[#bf360c]"></div>`;
                for (let day = 0; day < 7; day++) {
                    html += `<div class="${section.cell} border-r border-b border-[#bf360c]"></div>`;
                }
            }
        });
        plan.insertAdjacentHTML("beforeend", html);
    </script>
</body>
</html>
